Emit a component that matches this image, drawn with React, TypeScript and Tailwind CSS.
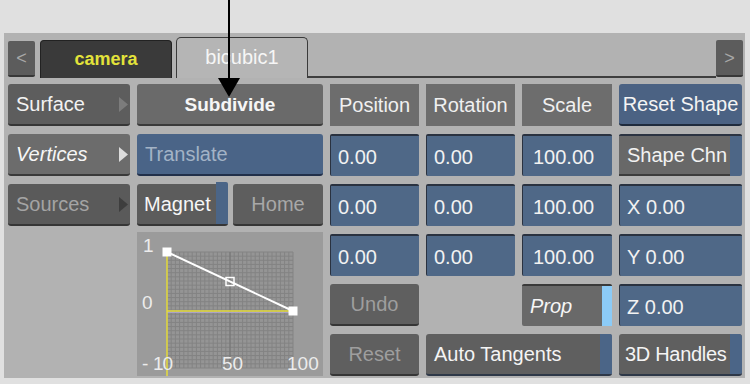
import React from "react";

const Tri = ({ color }: { color: string }) => (
  <svg width="9" height="15" viewBox="0 0 9 15" className="shrink-0">
    <polygon points="0,0 9,7.5 0,15" fill={color} />
  </svg>
);

const Field = ({ children }: { children: React.ReactNode }) => (
  <div className="h-full rounded-[2px] bg-[#4f6887] border-t-2 border-l border-[#2a3240] flex items-center pl-[7px] pt-[1px] text-[#f2f2f2]">
    {children}
  </div>
);

const Graph = () => {
  const vx: number[] = [];
  for (let i = 0; i <= 30; i++) vx.push(30 + i * 4.2);
  const hy: number[] = [];
  for (let i = 0; i <= 28; i++) hy.push(20 + i * (116 / 28));
  return (
    <div className="row-span-3 -mt-[2px] h-[144px] bg-[#9b9b9b]">
      <svg width="186" height="144" viewBox="0 0 186 144" className="block">
        <rect x="30" y="20" width="126" height="116" fill="#959595" />
        {vx.map((x, i) => (
          <line key={"v" + i} x1={x} y1={20} x2={x} y2={136} stroke="#838383" strokeWidth="1" />
        ))}
        {hy.map((y, i) => (
          <line key={"h" + i} x1={30} y1={y} x2={156} y2={y} stroke="#838383" strokeWidth="1" />
        ))}
        <line x1="93" y1="20" x2="93" y2="136" stroke="#747474" strokeWidth="1" />
        <line x1="30" y1="80.5" x2="156" y2="80.5" stroke="#aaa2c8" strokeWidth="1" />
        <line x1="30" y1="79" x2="156" y2="79" stroke="#e6dc3c" strokeWidth="1.5" />
        <line x1="30" y1="20" x2="30" y2="144" stroke="#e6dc3c" strokeWidth="1.5" />
        <line x1="30" y1="20" x2="156" y2="79" stroke="#ffffff" strokeWidth="2" />
        <rect x="25.5" y="15.5" width="9" height="9" fill="#ffffff" />
        <rect x="151.5" y="74.5" width="9" height="9" fill="#ffffff" />
        <rect x="89" y="45.5" width="8" height="8" fill="none" stroke="#ffffff" strokeWidth="1.5" />
        <g fontFamily="'Liberation Sans', Arial, sans-serif" fontSize="19" fill="#ececec">
          <text x="6" y="20">1</text>
          <text x="5" y="77">0</text>
          <text x="5" y="138">-</text>
          <text x="16" y="138" letterSpacing="-1">10</text>
          <text x="85" y="138">50</text>
          <text x="150" y="138">100</text>
        </g>
      </svg>
    </div>
  );
};

export default function App() {
  return (
    <div className="w-[750px] h-[384px] bg-[#e0e0e0] relative overflow-hidden font-['Liberation_Sans',Arial,sans-serif] text-[20px] leading-none whitespace-nowrap">
      <div className="pt-[33px] pl-[4px]">
        <div className="w-[741px] h-[345px] bg-[#b2b2b2] flex flex-col">
          {/* tab strip */}
          <div className="h-[45px] flex items-end pl-[4px] pr-[2px]">
            <div className="w-[27px] h-[36px] mb-[1px] rounded-[2px] bg-[#5c5c5c] border-b-2 border-[#383838] flex items-center justify-center text-[#a8a8a8] text-[18px]">
              &lt;
            </div>
            <div className="ml-[5px] w-[132px] h-[38px] rounded-t-[4px] bg-[#3a3a3a] border border-b-0 border-[#222] flex items-center justify-center text-[#e3e33a] text-[18px] font-bold pb-[2px]">
              camera
            </div>
            <div className="ml-[4px] w-[132px] h-[41px] rounded-t-[5px] bg-[#b5b5b5] border border-b-0 border-[#3a3a3a] flex items-center justify-center text-[#f6f6f6] text-[20px] pb-[2px]">
              bicubic1
            </div>
            <div className="flex-1 h-full border-b-2 border-[#3e3e3e]" />
            <div className="w-[27px] h-[37px] mb-[1px] rounded-[2px] bg-[#5c5c5c] border-b-2 border-[#383838] flex items-center justify-center text-[#a8a8a8] text-[18px]">
              &gt;
            </div>
          </div>
          {/* main grid */}
          <div className="pl-[4px] pt-[6px] grid grid-cols-[122px_186px_89px_89px_90px_123px] grid-rows-[42px_42px_42px_42px_42px_42px] gap-x-[7px] gap-y-[8px]">
            {/* row 1 */}
            <div className="rounded-[3px] bg-[#5d5d5d] border-b-2 border-[#363636] flex items-center justify-between pl-[8px] pr-[2px] text-[#f2f2f2]">
              <span>Surface</span>
              <Tri color="#7c7c7c" />
            </div>
            <div className="rounded-[3px] bg-[#6a6a6a] border-b-2 border-[#3a3a3a] flex items-center justify-center text-[#f6f6f6] text-[19px] font-bold">
              Subdivide
            </div>
            <div className="bg-[#6d6d6d] flex items-center justify-center text-[#f0f0f0]">Position</div>
            <div className="bg-[#6d6d6d] flex items-center justify-center text-[#f0f0f0]">Rotation</div>
            <div className="bg-[#6d6d6d] flex items-center justify-center text-[#f0f0f0]">Scale</div>
            <div className="rounded-[3px] bg-[#4b6283] border-b-2 border-[#1f2b3d] flex items-center justify-center text-[#f4f4f4]">
              Reset Shape
            </div>

            {/* row 2 */}
            <div className="rounded-[3px] bg-[#6c6c6c] border-b-2 border-[#3a3a3a] flex items-center justify-between pl-[8px] pr-[2px] text-[#f6f6f6] italic">
              <span>Vertices</span>
              <Tri color="#dcdcdc" />
            </div>
            <div className="rounded-[3px] bg-[#4a6487] border-b-2 border-[#22304a] flex items-center pl-[8px] text-[#a3b3c6]">
              Translate
            </div>
            <Field>0.00</Field>
            <Field>0.00</Field>
            <Field>
              <span className="pl-[3px]">100.00</span>
            </Field>
            <div className="rounded-[2px] bg-[#4d6686] border-t-2 border-[#2c3442] flex">
              <div className="flex-1 bg-[#686868] border-b-2 border-[#3c3c3c] flex items-center pl-[8px] text-[#f2f2f2]">
                Shape Chn
              </div>
              <div className="w-[12px]" />
            </div>

            {/* row 3 */}
            <div className="rounded-[3px] bg-[#5a5a5a] border-b-2 border-[#363636] flex items-center justify-between pl-[8px] pr-[2px] text-[#a4a4a4]">
              <span>Sources</span>
              <Tri color="#3e3e3e" />
            </div>
            <div className="flex gap-[5px]">
              <div className="w-[91px] rounded-[3px] bg-[#5c5c5c] border-b-2 border-[#363636] flex">
                <div className="flex-1 flex items-center pl-[7px] text-[#f6f6f6]">Magnet</div>
                <div className="w-[12px] bg-[#4b6587] rounded-tr-[2px] -mt-[2px]" />
              </div>
              <div className="flex-1 rounded-[3px] bg-[#5e5e5e] border-b-2 border-[#363636] flex items-center justify-center text-[#a8a8a8]">
                Home
              </div>
            </div>
            <Field>0.00</Field>
            <Field>0.00</Field>
            <Field>
              <span className="pl-[3px]">100.00</span>
            </Field>
            <Field>X 0.00</Field>

            {/* row 4 */}
            <div />
            <Graph />
            <Field>0.00</Field>
            <Field>0.00</Field>
            <Field>
              <span className="pl-[3px]">100.00</span>
            </Field>
            <Field>Y 0.00</Field>

            {/* row 5 */}
            <div className="col-start-3 rounded-[3px] bg-[#5f5f5f] border-b-2 border-[#363636] flex items-center justify-center text-[#9e9e9e]">
              Undo
            </div>
            <div />
            <div className="rounded-[2px] bg-[#696969] border-t-2 border-[#3a3a3a] flex">
              <div className="flex-1 flex items-center pl-[8px] text-[#f6f6f6] italic">Prop</div>
              <div className="w-[10px] bg-[#8ccbf7]" />
            </div>
            <Field>Z 0.00</Field>

            {/* row 6 */}
            <div className="col-start-3 rounded-[3px] bg-[#5f5f5f] border-b-2 border-[#363636] flex items-center justify-center text-[#9e9e9e]">
              Reset
            </div>
            <div className="col-span-2 rounded-[3px] bg-[#5f5f5f] border-b-2 border-[#2e3848] flex">
              <div className="flex-1 flex items-center pl-[8px] text-[#f4f4f4]">Auto Tangents</div>
              <div className="w-[12px] bg-[#4b6587] rounded-tr-[2px]" />
            </div>
            <div className="rounded-[3px] bg-[#5f5f5f] border-b-2 border-[#2e3848] flex overflow-hidden">
              <div className="flex-1 min-w-0 flex items-center pl-[6px] text-[#f4f4f4] tracking-[-0.3px]">3D Handles</div>
              <div className="w-[12px] shrink-0 bg-[#4b6587] rounded-tr-[2px]" />
            </div>
          </div>
        </div>
      </div>
      {/* annotation arrow */}
      <svg className="absolute left-[218px] top-0" width="24" height="99" viewBox="0 0 24 99">
        <line x1="11" y1="0" x2="11" y2="80" stroke="#000" strokeWidth="2" />
        <polygon points="0,78 22,78 11,97" fill="#000" />
      </svg>
    </div>
  );
}
